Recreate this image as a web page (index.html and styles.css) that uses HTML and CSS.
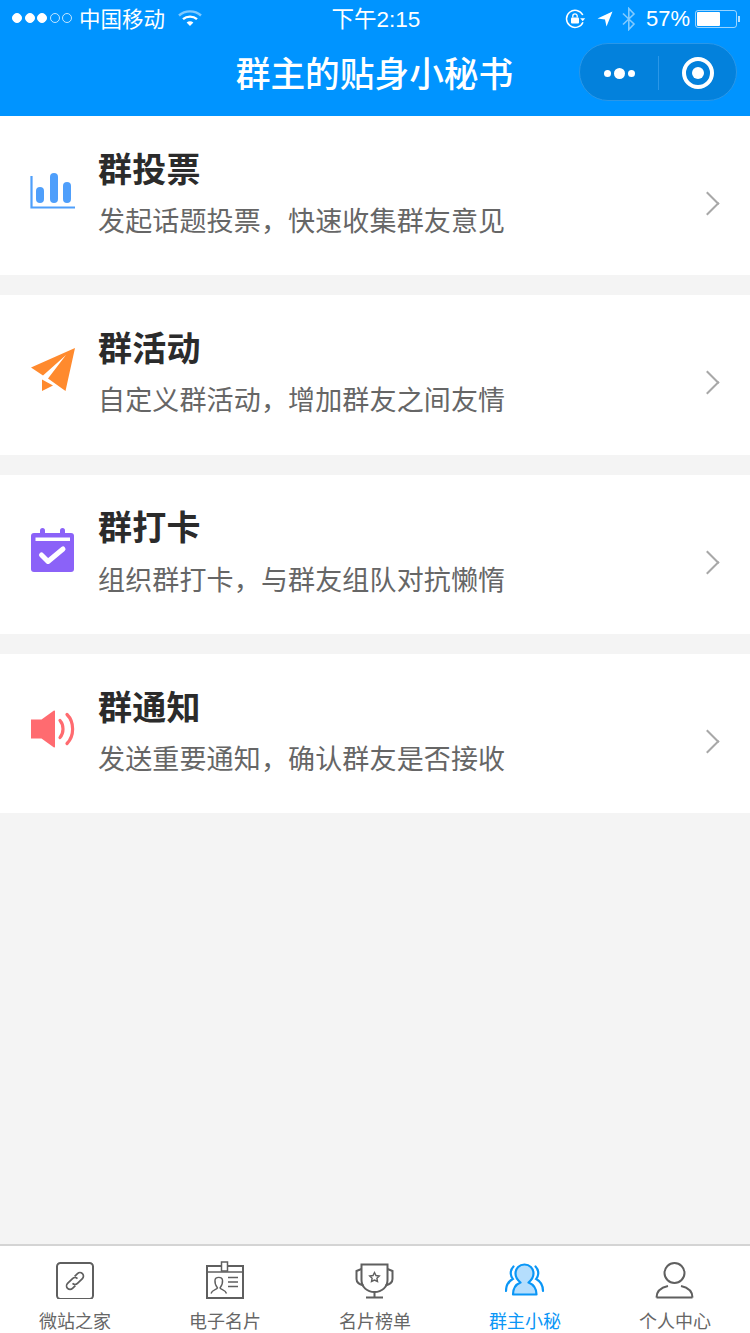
FILE: index.html
```html
<!DOCTYPE html>
<html lang="zh-CN">
<head>
    <meta charset="UTF-8">
    <meta name="viewport" content="width=device-width, initial-scale=1.0">
    <title>群主的贴身小秘书</title>
    <link rel="stylesheet" href="styles.css">
</head>
<body>
    <div class="app">
        <header class="top">
            <div class="status-bar">
                <div class="status-left">
                    <span class="signal">
                        <i class="dot"></i><i class="dot"></i><i class="dot"></i><i class="dot off"></i><i class="dot off"></i>
                    </span>
                    <span class="carrier">中国移动</span>
                    <svg class="wifi" width="24" height="18" viewBox="0 0 24 18">
                        <path d="M1 6.5C7 1 17 1 23 6.5" fill="none" stroke="#fff" stroke-opacity=".5" stroke-width="2.4"/>
                        <path d="M5 10.2C9 6.8 15 6.8 19 10.2" fill="none" stroke="#fff" stroke-width="2.4"/>
                        <path d="M8.6 13.4C10.6 11.9 13.4 11.9 15.4 13.4L12 17Z" fill="#fff"/>
                    </svg>
                </div>
                <div class="status-time">下午2:15</div>
                <div class="status-right">
                    <svg width="21" height="20" viewBox="0 0 21 20">
                        <path d="M18 13.2A8.6 8.6 0 1 1 17.8 6" fill="none" stroke="#fff" stroke-width="1.5"/>
                        <path d="M15.2 9.2h5l-2.5 3Z" fill="#fff"/>
                        <rect x="6" y="8.6" width="8" height="6" rx="1" fill="#fff"/>
                        <path d="M7.8 8.6V7a2.2 2.2 0 0 1 4.4 0v1.6" fill="none" stroke="#fff" stroke-width="1.3"/>
                    </svg>
                    <svg class="arrow" width="16" height="16" viewBox="0 0 16 16">
                        <path d="M0.5 7.6L15.5 0.5L9.5 15.5L8 8.4Z" fill="#fff"/>
                    </svg>
                    <svg class="bt" width="16" height="24" viewBox="0 0 16 24">
                        <path d="M2 6.5L13 17L7.8 22.5V1.5L13 7L2 17.5" fill="none" stroke="#fff" stroke-opacity=".5" stroke-width="1.6"/>
                    </svg>
                    <span class="percent">57%</span>
                    <span class="battery"><span class="battery-level"></span></span>
                    <span class="battery-tip"></span>
                </div>
            </div>
            <div class="nav-bar">
                <h1 class="nav-title">群主的贴身小秘书</h1>
                <div class="capsule">
                    <div class="capsule-more"><i></i><i class="big"></i><i></i></div>
                    <div class="capsule-line"></div>
                    <div class="capsule-close"><i></i></div>
                </div>
            </div>
        </header>

        <main class="list">
            <a class="card">
                <svg class="card-icon" width="46" height="38" viewBox="0 0 46 38">
                    <path d="M1.5 4V35.5H45" fill="none" stroke="#4f9ffb" stroke-width="2.2"/>
                    <rect x="6" y="15" width="8" height="16" rx="4" fill="#4f9ffb"/>
                    <rect x="20" y="1" width="8" height="30" rx="4" fill="#4f9ffb"/>
                    <rect x="33" y="10" width="8" height="21" rx="4" fill="#4f9ffb"/>
                </svg>
                <div class="card-text">
                    <div class="card-title">群投票</div>
                    <div class="card-desc">发起话题投票，快速收集群友意见</div>
                </div>
                <span class="chevron"></span>
            </a>
            <a class="card">
                <svg class="card-icon" width="46" height="46" viewBox="0 0 46 46">
                    <path d="M45 1L1 20.500L13 28.500L36 8L18 31.500L35.500 44Z" fill="#ff8a2e"/>
                    <path d="M12 32.500L23 38.500L12 44Z" fill="#ff8a2e"/>
                </svg>
                <div class="card-text">
                    <div class="card-title">群活动</div>
                    <div class="card-desc">自定义群活动，增加群友之间友情</div>
                </div>
                <span class="chevron"></span>
            </a>
            <a class="card">
                <svg class="card-icon" width="46" height="46" viewBox="0 0 46 46">
                    <rect x="1" y="6" width="43" height="39" rx="3" fill="#8b62f8"/>
                    <rect x="10" y="1" width="5" height="10" rx="2.500" fill="#8b62f8"/>
                    <rect x="30" y="1" width="5" height="10" rx="2.500" fill="#8b62f8"/>
                    <rect x="5.500" y="10.500" width="34.500" height="3.500" fill="#fff"/>
                    <path d="M11.500 28L18 34.500L33 22" fill="none" stroke="#fff" stroke-width="5" stroke-linecap="round" stroke-linejoin="round"/>
                </svg>
                <div class="card-text">
                    <div class="card-title">群打卡</div>
                    <div class="card-desc">组织群打卡，与群友组队对抗懒惰</div>
                </div>
                <span class="chevron"></span>
            </a>
            <a class="card">
                <svg class="card-icon" width="46" height="40" viewBox="0 0 46 40">
                    <path d="M1 10.500H11.500L24 1.500C24.500 1.200 25 1.500 25 2.200V37.800C25 38.500 24.500 38.800 24 38.500L11.500 29.500H1Z" fill="#ff6b70"/>
                    <path d="M30 11.500C34 16 34 24 30 28.500" fill="none" stroke="#ff6b70" stroke-width="3.200" stroke-linecap="round"/>
                    <path d="M37 5.500C44.500 13 44.500 27 37 34.500" fill="none" stroke="#ff6b70" stroke-width="3.200" stroke-linecap="round"/>
                </svg>
                <div class="card-text">
                    <div class="card-title">群通知</div>
                    <div class="card-desc">发送重要通知，确认群友是否接收</div>
                </div>
                <span class="chevron"></span>
            </a>
        </main>

        <nav class="tabbar">
            <a class="tab">
                <svg width="40" height="40" viewBox="0 0 40 40">
                    <rect x="2" y="4" width="36" height="36" rx="3.500" fill="none" stroke="#5f5f5f" stroke-width="2"/>
                    <g fill="none" stroke="#5f5f5f" stroke-width="1.700" transform="rotate(-45 20 22)">
                        <path d="M17 25.500h-4a3.500 3.500 0 0 1 0-7h7a3.500 3.500 0 0 1 3.500 3.500"/>
                        <path d="M23 18.500h4a3.500 3.500 0 0 1 0 7h-7a3.500 3.500 0 0 1-3.500-3.500"/>
                    </g>
                </svg>
                <span>微站之家</span>
            </a>
            <a class="tab">
                <svg width="40" height="40" viewBox="0 0 40 40">
                    <rect x="2" y="7" width="36" height="32" fill="none" stroke="#5f5f5f" stroke-width="2"/>
                    <path d="M2 13H38" stroke="#5f5f5f" stroke-width="1.500"/>
                    <rect x="16.500" y="3" width="6" height="9" fill="#fff" stroke="#5f5f5f" stroke-width="1.500"/>
                    <path d="M6 34.500C7 30.500 11.500 31 12.500 29C11 27 9.500 24.500 10 21C10.500 17.500 17 17.500 17.500 21C18 24.500 16.500 27 15 29C16 31 20.500 30.500 21.500 34.500M23 18.500H33M23 23H33M23 27.500H33" fill="none" stroke="#5f5f5f" stroke-width="1.400"/>
                </svg>
                <span>电子名片</span>
            </a>
            <a class="tab">
                <svg width="40" height="40" viewBox="0 0 40 40">
                    <path d="M6.500 5.500H32.500V21C32.500 28 27 33 19.500 33C12 33 6.500 28 6.500 21Z" fill="none" stroke="#5f5f5f" stroke-width="2"/>
                    <path d="M6.500 10L1.500 12V20C1.500 23 4.500 25.500 8.500 26.500M32.500 10L37.500 12V20C37.500 23 34.500 25.500 30.500 26.500M19.500 33V38M11 38.500H28" fill="none" stroke="#5f5f5f" stroke-width="2"/>
                    <path d="M19.500 13.500L21 16.500L24.300 17L21.900 19.300L22.500 22.500L19.500 21L16.500 22.500L17.100 19.300L14.700 17L18 16.500Z" fill="none" stroke="#5f5f5f" stroke-width="1.400"/>
                </svg>
                <span>名片榜单</span>
            </a>
            <a class="tab active">
                <svg width="40" height="40" viewBox="0 0 40 40">
                    <path d="M8 35.500C8 29 10.500 25.500 15.500 23.500C12.500 21 10.500 18 10.500 14.500C10.500 9 14.500 5.500 19.500 5.500C24.500 5.500 28.500 9 28.500 14.500C28.500 18 26.500 21 23.500 23.500C28.500 25.500 31.500 29 31.500 35.500Z" fill="#b5defd" stroke="#0a96f6" stroke-width="2.200" stroke-linejoin="round"/>
                    <path d="M8.500 7.500C6.500 9.500 5.500 12 5.800 15C6 17 6.800 18.800 7.800 20C3 22.500 1 27 1 32M30.500 7.500C32.500 9.500 33.500 12 33.200 15C33 17 32.200 18.800 31.200 20C36 22.500 38 27 38 32" fill="none" stroke="#0a96f6" stroke-width="2.200" stroke-linecap="round"/>
                </svg>
                <span>群主小秘</span>
            </a>
            <a class="tab">
                <svg width="40" height="40" viewBox="0 0 40 40">
                    <circle cx="19.500" cy="14" r="10" fill="none" stroke="#5f5f5f" stroke-width="2"/>
                    <path d="M1.500 38.500C1.500 32 6.500 28.500 13 27M37.500 38.500C37.500 32 32.500 28.500 26 27M1.500 38.500H37.500" fill="none" stroke="#5f5f5f" stroke-width="2"/>
                </svg>
                <span>个人中心</span>
            </a>
        </nav>
    </div>
</body>
</html>
```

FILE: styles.css
```css
html, body {
    margin: 0;
    padding: 0;
}
body {
    font-family: "Liberation Sans", "Noto Sans CJK SC", sans-serif;
    background-color: #f4f4f4;
}
.app {
    width: 750px;
    height: 1333px;
    display: flex;
    flex-direction: column;
    overflow: hidden;
}

/* blue header: phone status bar and page title */
.top {
    height: 116px;
    flex: none;
    background-color: #0094ff;
    color: #fff;
}
.status-bar {
    height: 38px;
    display: grid;
    grid-template-columns: 1fr auto 1fr;
    align-items: center;
    padding: 0 10px 0 12px;
    font-size: 21.5px;
}
.status-left, .status-right {
    display: flex;
    align-items: center;
}
.status-right {
    justify-content: flex-end;
    gap: 8px;
}
.signal {
    display: flex;
    gap: 2.5px;
    margin-right: 7px;
    margin-bottom: 2px;
}
.dot {
    width: 10px;
    height: 10px;
    box-sizing: border-box;
    border-radius: 50%;
    background: #fff;
    border: 1px solid #fff;
}
.dot.off {
    background: none;
    border-color: rgba(255, 255, 255, 0.75);
}
.carrier {
    margin-bottom: 4px;
}
.wifi {
    margin-left: 13px;
    margin-bottom: 2px;
}
.status-time {
    font-size: 22.500px;
    margin-bottom: 4px;
}
.arrow {
    margin-left: 3px;
}
.percent {
    font-size: 22px;
    margin-left: 1px;
}
.battery {
    display: block;
    width: 42px;
    height: 18px;
    box-sizing: border-box;
    padding: 1px;
    margin-left: -3px;
    border: 1px solid rgba(255, 255, 255, 0.6);
    border-radius: 3px;
}
.battery-level {
    display: block;
    width: 23px;
    height: 100%;
    background: #fff;
    border-radius: 1px;
}
.battery-tip {
    width: 2px;
    height: 6px;
    margin-left: -7px;
    background: rgba(255, 255, 255, 0.7);
}

.nav-bar {
    position: relative;
    height: 78px;
    display: flex;
    justify-content: center;
    align-items: center;
}
.nav-title {
    margin: 0 1px 10px 0;
    font-size: 34.700px;
    font-weight: 500;
}
.capsule {
    position: absolute;
    right: 13px;
    top: 5px;
    width: 158px;
    height: 58px;
    box-sizing: border-box;
    padding-top: 2px;
    display: flex;
    align-items: center;
    background-color: #0381dc;
    border: 1px solid #2a97e8;
    border-radius: 29px;
}
.capsule-more {
    width: 78px;
    display: flex;
    justify-content: center;
    align-items: center;
    gap: 3px;
}
.capsule-more i {
    width: 7px;
    height: 7px;
    border-radius: 50%;
    background: #fff;
}
.capsule-more i.big {
    width: 11px;
    height: 11px;
}
.capsule-line {
    width: 1px;
    height: 34px;
    background: #2a97e8;
}
.capsule-close {
    flex: 1;
    display: flex;
    justify-content: center;
}
.capsule-close i {
    width: 32px;
    height: 32px;
    box-sizing: border-box;
    border: 4px solid #fff;
    border-radius: 50%;
    display: flex;
    align-items: center;
    justify-content: center;
}
.capsule-close i::after {
    content: "";
    width: 12px;
    height: 12px;
    border-radius: 50%;
    background: #fff;
}

/* feature list */
.list {
    flex: 1;
    display: flex;
    flex-direction: column;
    gap: 20px;
}
.card {
    height: 159.330px;
    display: flex;
    align-items: center;
    padding: 0 30px;
    background-color: #fff;
}
.card-icon {
    width: 46px;
    flex: none;
    margin-top: -9px;
}
.card-text {
    flex: 1;
    margin-left: 22px;
    margin-top: -4.500px;
}
.card-title {
    font-size: 34px;
    line-height: 50px;
    font-weight: 700;
    color: #2b2b2b;
    letter-spacing: 0.200px;
}
.card-desc {
    margin-top: 7.500px;
    font-size: 27px;
    line-height: 40px;
    color: #666;
    letter-spacing: 0.150px;
}
.chevron {
    width: 15px;
    height: 15px;
    margin-top: 16px;
    margin-right: 4px;
    border-top: 2px solid #a8a8a8;
    border-right: 2px solid #a8a8a8;
    transform: rotate(45deg);
}

/* bottom tabs */
.tabbar {
    height: 87px;
    flex: none;
    display: grid;
    grid-template-columns: repeat(5, 1fr);
    background-color: #fff;
    border-top: 2px solid #d4d4d4;
}
.tab {
    display: flex;
    flex-direction: column;
    align-items: center;
    padding-top: 13px;
    font-size: 18px;
    line-height: 22px;
    color: #666;
}
.tab svg {
    display: block;
    margin-bottom: 12px;
}
.tab.active {
    color: #0a96f6;
}
```
